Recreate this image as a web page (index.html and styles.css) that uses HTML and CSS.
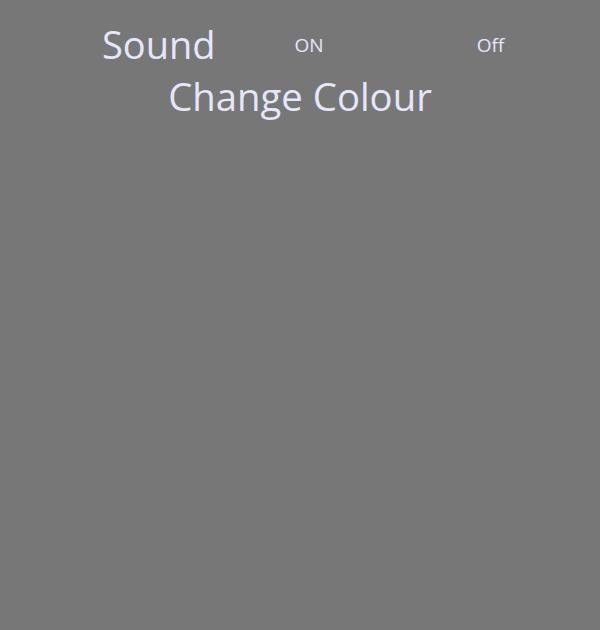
FILE: index.html
```html
<!DOCTYPE html>
<html>
<head>
<meta charset="utf-8">
<link rel="stylesheet" href="styles.css">
</head>
<body>
<div class="settings">
  <div class="row">
    <span class="label">Sound</span>
    <span class="opt on">ON</span>
    <span class="opt off">Off</span>
  </div>
  <div class="row center">
    <span class="label wide">Change Colour</span>
  </div>
</div>
</body>
</html>
```
FILE: styles.css
```css
html, body {
  margin: 0;
  padding: 0;
  background: #777777;
  height: 100%;
}
body {
  font-family: "Open Sans", "Noto Sans", sans-serif;
  color: #e6e6fa;
}
.settings {
  padding-top: 25px;
}
.row {
  display: flex;
  align-items: flex-start;
  padding-left: 102px;
  height: 52px;
}
.row.center {
  justify-content: center;
  padding-left: 0;
}
.label {
  font-size: 38px;
  line-height: 1;
}
.label.wide {
  font-size: 38.3px;
}
.opt {
  font-size: 19px;
  line-height: 1;
  margin-top: 11px;
}
.on {
  margin-left: 79px;
}
.off {
  margin-left: 153px;
}
```
